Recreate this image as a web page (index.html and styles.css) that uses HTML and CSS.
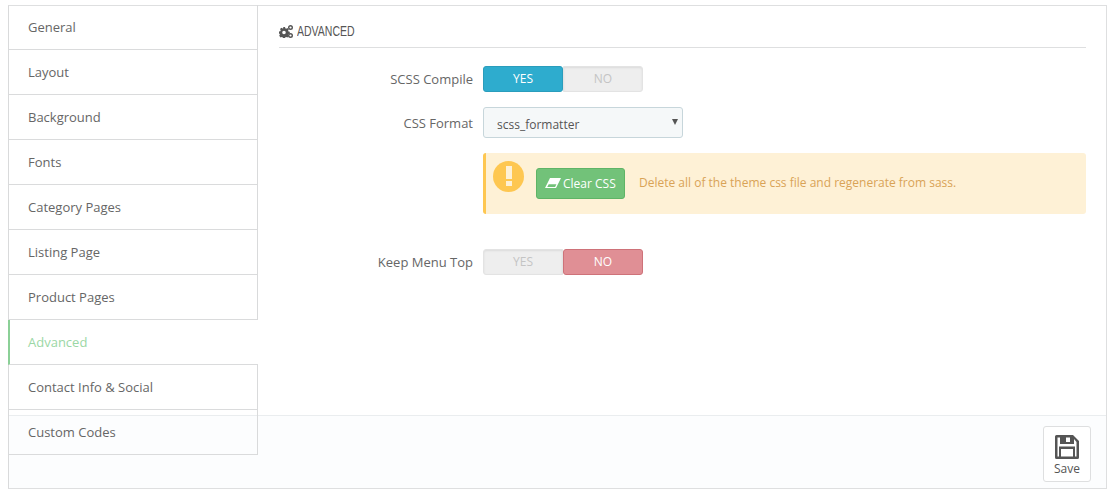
FILE: index.html
```html
<!DOCTYPE html>
<html lang="en">
<head>
<meta charset="utf-8">
<title>Advanced</title>
<link rel="stylesheet" href="styles.css">
</head>
<body>
<div class="panel">
  <ul class="tabs">
    <li class="tab">General</li>
    <li class="tab">Layout</li>
    <li class="tab">Background</li>
    <li class="tab">Fonts</li>
    <li class="tab">Category Pages</li>
    <li class="tab">Listing Page</li>
    <li class="tab">Product Pages</li>
    <li class="tab active">Advanced</li>
    <li class="tab">Contact Info &amp; Social</li>
    <li class="tab">Custom Codes</li>
  </ul>
  <main class="content">
    <h3 class="heading">
      <svg class="cogs" viewBox="0 0 14 13" width="14" height="13" aria-hidden="true">
        <path fill="#555" fill-rule="evenodd" d="M4 2h2l.3 1.300.9.4 1.200-.7 1.400 1.400-.7 1.200.4.9 1.300.3v2l-1.300.3-.4.9.7 1.200-1.400 1.400-1.200-.7-.9.4-.3 1.300H4l-.3-1.300-.9-.4-1.200.7L.2 10.800l.7-1.200-.4-.9L0 8.500v-2l1.300-.3.4-.9-.7-1.200L2.400 2.700l1.200.7.9-.4zM5 5.700a1.800 1.800 0 1 0 0 3.600 1.800 1.800 0 0 0 0-3.600z"/>
        <circle cx="11.500" cy="2.500" r="1.800" fill="none" stroke="#555" stroke-width="1.400"/>
        <circle cx="11.500" cy="10.500" r="1.800" fill="none" stroke="#555" stroke-width="1.400"/>
      </svg>
      <span class="heading-text">ADVANCED</span>
    </h3>
    <div class="row first">
      <label class="label">SCSS Compile</label>
      <div class="toggle">
        <span class="opt yes on">YES</span>
        <span class="opt no">NO</span>
      </div>
    </div>
    <div class="row second">
      <label class="label">CSS Format</label>
      <div class="select">
        <span>scss_formatter</span>
        <span class="caret"></span>
      </div>
    </div>
    <div class="row third">
      <span class="label"></span>
      <div class="alert">
        <svg class="warn" viewBox="0 0 31 31" width="31" height="31" aria-hidden="true">
          <circle cx="15.500" cy="15.500" r="15.500" fill="#fec751"/>
          <rect x="13" y="5" width="6" height="13" fill="#fef1d6"/>
          <rect x="13" y="20" width="6" height="5" fill="#fef1d6"/>
        </svg>
        <button class="btn-clear" type="button">
          <svg viewBox="0 0 16 10" width="16" height="10" aria-hidden="true">
            <path fill="#fff" d="M5 0h11l-5 10H0zM3.700 6.300 2.200 9h7.900l1.300-2.700z"/>
          </svg>
          <span>Clear CSS</span>
        </button>
        <span class="alert-text">Delete all of the theme css file and regenerate from sass.</span>
      </div>
    </div>
    <div class="row fourth">
      <label class="label">Keep Menu Top</label>
      <div class="toggle">
        <span class="opt yes">YES</span>
        <span class="opt no on">NO</span>
      </div>
    </div>
  </main>
  <footer class="footer">
    <button class="btn-save" type="button">
      <svg viewBox="0 0 24 24" width="24" height="24" aria-hidden="true">
        <path fill="#555" fill-rule="evenodd" d="M1.500 0H18l6 6v16.500a1.500 1.500 0 0 1-1.500 1.500h-21A1.500 1.500 0 0 1 0 22.500v-21A1.500 1.500 0 0 1 1.500 0zM11 2.500V7h4V2.500zM19 4v5H5V2.500H2.500v19H4V11.500h16v10h1.500V7zM6 14v7.500h12V14z"/>
      </svg>
      <span>Save</span>
    </button>
  </footer>
</div>
</body>
</html>
```

FILE: styles.css
```css
* { box-sizing: border-box; }

html, body { margin: 0; padding: 0; background: #fff; }

body {
  padding: 5px 2px 0 8px;
  font-family: "Open Sans", "Liberation Sans", sans-serif;
  font-size: 13px;
  color: #555;
}

.panel {
  display: grid;
  grid-template-columns: 250px 1fr;
  grid-template-rows: 409px 73px;
  height: 484px;
  border: 1px solid #dedfe0;
  border-left: 1px solid #d9dadb;
}

.tabs {
  grid-column: 1;
  grid-row: 1 / 3;
  z-index: 1;
  width: 249px;
  height: 450px;
  margin: -1px 0 0;
  padding: 0;
  list-style: none;
  border-right: 1px solid #d9dadb;
}

.tab {
  height: 45px;
  padding: 0 19px;
  line-height: 45px;
  border-bottom: 1px solid #dadbdc;
  color: #666;
}

.tab.active {
  margin-left: -1px;
  margin-right: -1px;
  padding-left: 18px;
  border-left: 2px solid #8bd097;
  color: #9bd7a5;
  background: #fff;
}

.content {
  grid-column: 2;
  grid-row: 1;
  padding: 0 20px;
}

.heading {
  display: flex;
  align-items: center;
  gap: 4px;
  height: 42px;
  margin: 0;
  padding-top: 9px;
  border-bottom: 1px solid #dedfe0;
  font-weight: 400;
  font-size: 14px;
  color: #555;
}

.heading-text {
  font-family: "Liberation Sans", sans-serif;
  transform: scaleX(.75);
  transform-origin: left center;
}

.row { display: flex; align-items: center; }
.row.first { margin-top: 18px; }
.row.second { margin-top: 15px; }
.row.third { margin-top: 15px; align-items: flex-start; }
.row.fourth { margin-top: 35px; }

.label {
  flex: none;
  width: 194px;
  margin-right: 10px;
  text-align: right;
  color: #666;
}

.toggle {
  display: flex;
  width: 160px;
  height: 26px;
  border-radius: 3px;
  font-size: 12px;
  font-weight: 400;
}

.opt {
  flex: 1;
  display: flex;
  align-items: center;
  justify-content: center;
  padding-bottom: 2px;
  background: #eee;
  color: #c4c4c4;
  border: 1px solid #e3e3e3;
  box-shadow: inset 0 1px 2px rgba(0, 0, 0, .08);
}

.opt.yes { border-radius: 3px 0 0 3px; }
.opt.no { border-radius: 0 3px 3px 0; }

.opt.yes.on {
  background: #2eacce;
  border-color: #2a9dbc;
  color: #fff;
  border-radius: 3px;
  box-shadow: none;
}

.opt.no.on {
  background: #e08f95;
  border-color: #ce7279;
  color: #fff;
  border-radius: 3px;
  box-shadow: none;
}

.select {
  position: relative;
  width: 200px;
  height: 31px;
  padding: 0 13px;
  line-height: 33px;
  font-size: 12px;
  color: #555;
  background: #f5f8f9;
  border: 1px solid #c7d6db;
  border-radius: 3px;
}

.caret {
  position: absolute;
  top: 11px;
  right: 4px;
  border-left: 3px solid transparent;
  border-right: 3px solid transparent;
  border-top: 6px solid #555;
}

.alert {
  display: flex;
  align-items: center;
  width: 603px;
  height: 61px;
  padding: 0 0 1px 7px;
  background: #fef1d6;
  border-left: 3px solid #fec751;
  border-radius: 3px;
  color: #d9a356;
}

.warn { flex: none; margin-top: -13px; }

.btn-clear {
  display: flex;
  align-items: center;
  gap: 2px;
  height: 31px;
  width: 89px;
  margin-left: 12px;
  padding: 0 0 0 8px;
  font: inherit;
  font-size: 12px;
  color: #fff;
  background: #72c279;
  border: 1px solid #5fb466;
  border-radius: 3px;
}

.alert-text { margin: -2px 0 0 14px; font-size: 12px; }

.footer {
  grid-column: 1 / 3;
  grid-row: 2;
  display: flex;
  justify-content: flex-end;
  align-items: flex-start;
  padding: 10px 15px 0 0;
  background: #fcfdfe;
  border-top: 1px solid #eaedef;
}

.btn-save {
  display: flex;
  flex-direction: column;
  align-items: center;
  width: 48px;
  height: 56px;
  padding: 8px 0 0;
  font: inherit;
  font-size: 12px;
  color: #555;
  background: #fff;
  border: 1px solid #dedfe0;
  border-radius: 3px;
}

.btn-save span { margin-top: 1px; }
```
